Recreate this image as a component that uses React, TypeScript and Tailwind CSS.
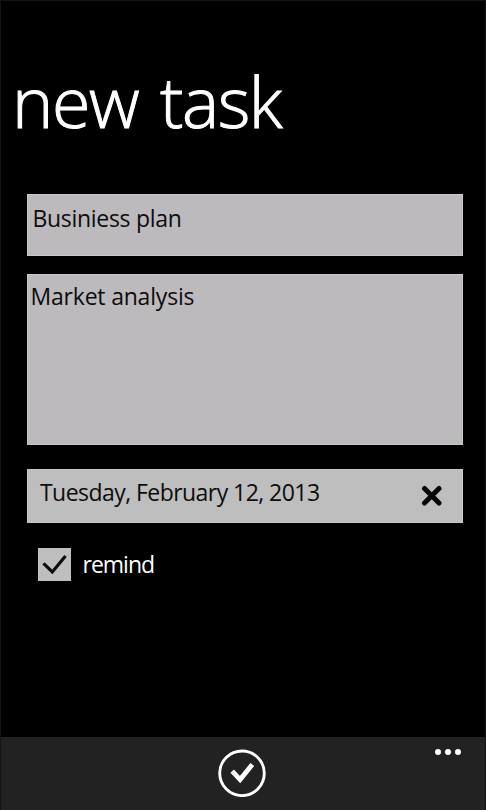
import React from "react";

function Header() {
  return (
    <header className="h-[193px] shrink-0 pl-[11px] pt-[60px]">
      <h1 className="whitespace-nowrap text-[70px] font-light leading-[80px] tracking-[-1.4px] text-white [-webkit-text-stroke:1px_white] [word-spacing:5px]">
        new task
      </h1>
    </header>
  );
}

function CloseIcon() {
  return (
    <svg width="22" height="22" viewBox="0 0 22 22" fill="none" stroke="#080808" strokeWidth="5" strokeLinecap="round">
      <path d="M3.5 3.5 18 18M18 3.5 3.5 18" />
    </svg>
  );
}

function AppBar() {
  return (
    <footer className="flex h-[73px] shrink-0 bg-[#222222]">
      <div className="w-[217px]" />
      <button aria-label="save" className="mt-[12px] h-12 w-12">
        <svg width="48" height="48" viewBox="0 0 48 48" fill="none" stroke="#ffffff">
          <circle cx="24" cy="24.3" r="22.3" strokeWidth="2.9" />
          <path d="M14.2 22.2 22.1 30.6 34.3 15.4" strokeWidth="4.8" />
        </svg>
      </button>
      <div className="ml-[168.5px] mt-[12px] flex h-[6px] gap-[4px]">
        <span className="h-[6px] w-[6px] rounded-full bg-white" />
        <span className="h-[6px] w-[6px] rounded-full bg-white" />
        <span className="h-[6px] w-[6px] rounded-full bg-white" />
      </div>
    </footer>
  );
}

export default function App() {
  return (
    <div className="flex h-[810px] w-[486px] flex-col overflow-hidden border-x border-t border-[#141414] bg-black font-['Open_Sans','Noto_Sans',sans-serif] text-[23px] leading-8 text-[#0c0c0c]">
      <Header />
      <main className="flex grow flex-col pl-[26px] pr-[22px]">
        <div className="h-[62px] border border-[#c9c8c9] bg-[#bdbabd] pl-[4.5px] pt-[7px]">
          <span className="tracking-[-0.3px]">Businiess plan</span>
        </div>
        <div className="mt-[18px] h-[171px] border border-[#c9c8c9] bg-[#bdbabd] pl-[2.5px] pt-[5px]">
          <span className="tracking-[-0.2px]">Market analysis</span>
        </div>
        <div className="mt-[24px] flex h-[54px] justify-between border border-[#c9c8c9] bg-[#bebebe] pl-[12px] pr-[19px] pt-[6px]">
          <span className="tracking-[-0.55px]">Tuesday, February 12, 2013</span>
          <button aria-label="clear date" className="mt-[9px] h-[22px] w-[22px]">
            <CloseIcon />
          </button>
        </div>
        <label className="mt-[25px] flex pl-[11px] text-white">
          <span className="h-[33px] w-[33px] bg-[#bebebe]">
            <svg width="33" height="33" viewBox="0 0 33 33" fill="none" stroke="#0c0c0c" strokeWidth="3.2">
              <path d="M5.5 15.3 14.3 23.9 27.5 8" />
            </svg>
          </span>
          <span className="ml-[11.5px] tracking-[-1px]">remind</span>
        </label>
      </main>
      <AppBar />
    </div>
  );
}
